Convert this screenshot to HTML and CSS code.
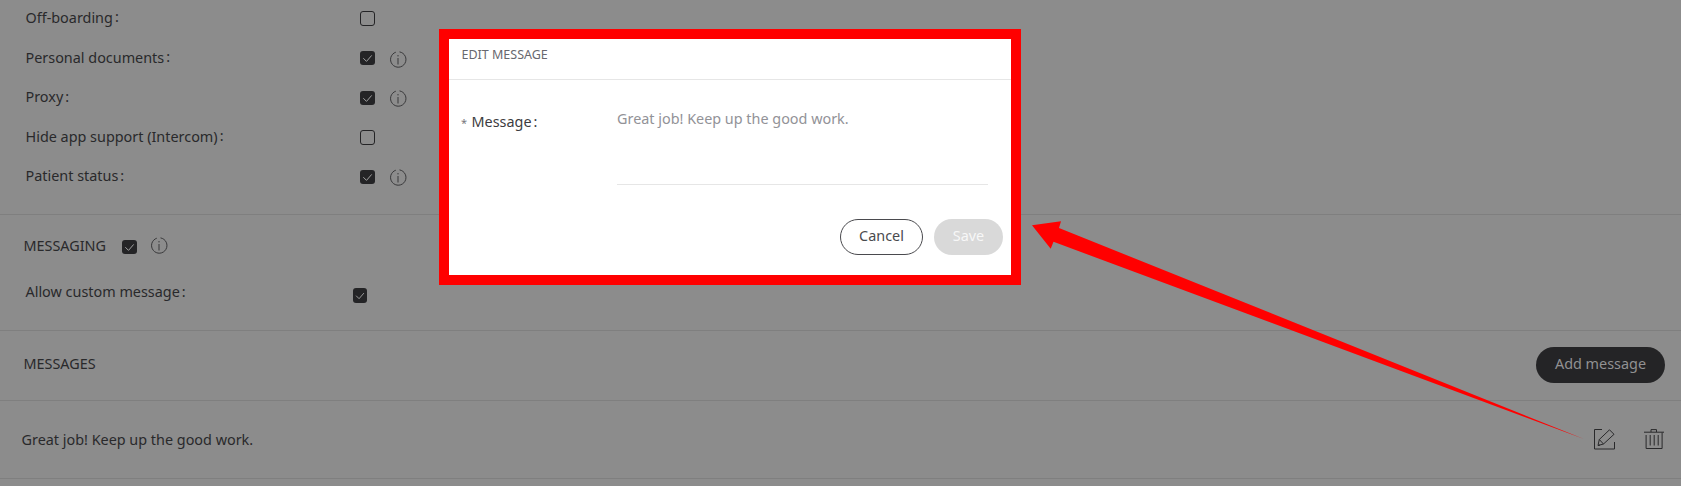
FILE: index.html
```html
<!DOCTYPE html>
<html lang="en">
<head>
<meta charset="utf-8">
<title>Messaging settings</title>
<link rel="stylesheet" href="styles.css">
</head>
<body>
<svg class="defs" aria-hidden="true">
  <symbol id="info" viewBox="0 0 17 17"><path d="M9.5 .9A7.7 7.7 0 1 1 5.8 1.2M8 7v6.5M8 4v1.4"/></symbol>
  <symbol id="check" viewBox="0 0 15 14"><path d="M3.3 7.2l3.2 3.2 5.2-6"/></symbol>
</svg>
<main class="page">
  <section class="options">
    <div class="option"><span class="label">Off-boarding<i class="colon high">:</i></span><span class="box empty"></span></div>
    <div class="option"><span class="label">Personal documents<i class="colon high">:</i></span><span class="box"><svg><use href="#check"/></svg></span><svg class="info"><use href="#info"/></svg></div>
    <div class="option low"><span class="label">Proxy<i class="colon">:</i></span><span class="box"><svg><use href="#check"/></svg></span><svg class="info"><use href="#info"/></svg></div>
    <div class="option"><span class="label">Hide app support (Intercom)<i class="colon high">:</i></span><span class="box empty"></span></div>
    <div class="option low"><span class="label">Patient status<i class="colon">:</i></span><span class="box"><svg><use href="#check"/></svg></span><svg class="info"><use href="#info"/></svg></div>
  </section>
  <section class="messaging">
    <div class="heading"><h2 class="title">MESSAGING</h2><span class="box"><svg><use href="#check"/></svg></span><svg class="info"><use href="#info"/></svg></div>
    <div class="custom"><span class="label">Allow custom message<i class="colon">:</i></span><span class="box narrow"><svg><use href="#check"/></svg></span></div>
  </section>
  <section class="messages-head">
    <h2 class="title">MESSAGES</h2>
    <button class="button add">Add message</button>
  </section>
  <section class="message-row">
    <span class="message">Great job! Keep up the good work.</span>
    <span class="actions">
      <svg class="edit" viewBox="0 0 21 21"><path d="M8 .5H.5v19.5H20.5V13"/><path d="M4 16.5l1.3-6L15.5.8 20 5.3 9.5 15zM5.3 10.5l4.2 4.5M4 16.5l2-.5"/></svg>
      <svg class="trash" viewBox="0 0 20 20"><path d="M0 3.2h20M7 3V.6h5.5V3M2.1 6v13.5h16V3.5M6.2 6v10.5M10.2 6v10.5M14.2 6v10.5"/></svg>
    </span>
  </section>
</main>
<div class="dialog">
  <header class="dialog-head">EDIT MESSAGE</header>
  <div class="field">
    <span class="field-label"><span class="star">*</span>Message<i class="colon">:</i></span>
    <div class="textarea">Great job! Keep up the good work.</div>
  </div>
  <footer class="dialog-foot">
    <button class="button cancel">Cancel</button>
    <button class="button save">Save</button>
  </footer>
</div>
<svg class="arrow" viewBox="0 0 1681 486"><path d="M1032 225.3L1061 221.2 1059 228 1584 439 1053.5 241.8 1050.7 248.7Z"/></svg>
</body>
</html>
```
FILE: styles.css
```css
* { box-sizing: border-box; }
body {
  margin: 0;
  width: 1681px;
  height: 486px;
  overflow: hidden;
  background: #8c8c8c;
  color: #29292b;
  font: 14.4px/20px "Noto Sans", sans-serif;
}
.defs { position: absolute; width: 0; height: 0; }
svg { fill: none; stroke: currentColor; }
.page { display: flex; flex-direction: column; height: 486px; }
.page section { border-bottom: 1px solid #7f7f7f; flex: none; }
.label { width: 334.5px; }
.colon { font-style: normal; margin-left: 2px; }
.high { position: relative; top: -1px; }
.options {
  display: grid;
  grid-template-rows: 40px 39px 40px 39px 40px;
  height: 215px;
  padding: 8px 0 0 25.5px;
}
.option { display: flex; align-items: flex-start; }
.box {
  display: flex;
  width: 15px;
  height: 14px;
  margin-top: 3px;
  border-radius: 3px;
  background: #242426;
  color: #a0a0a0;
}
.box svg { width: 100%; height: 100%; }
.empty { height: 15px; border: 1px solid #242426; background: none; }
.info { width: 17px; height: 17px; margin: 2.5px 0 0 14.5px; stroke-width: 1; color: #38383a; }
.low .box { margin-top: 4px; }
.messaging { height: 116px; }
.heading { display: flex; padding: 21px 0 0 23.5px; }
.title { margin: 0; font-size: 14.4px; font-weight: 400; line-height: 20px; width: 98.5px; }
.heading .box { margin-top: 4px; }
.heading .info { margin: .5px 0 0 13.5px; }
.custom { display: flex; padding: 26px 0 0 25.5px; }
.custom .label { width: 327.5px; }
.custom .narrow { width: 14px; height: 15px; margin-top: 6px; }
.messages-head {
  display: flex;
  justify-content: space-between;
  height: 70px;
  padding: 16px 16px 0 23.5px;
}
.messages-head .title { padding-top: 7px; }
.button {
  height: 36px;
  border: 0;
  border-radius: 18px;
  padding: 0 0 2px;
  font: inherit;
}
.add { width: 129px; background: #242426; color: #919192; }
.message-row {
  display: flex;
  justify-content: space-between;
  height: 78px;
  padding: 28px 17px 0 21.5px;
}
.message { padding-top: 1px; }
.actions { display: flex; gap: 29px; }
.edit { width: 21px; height: 21px; }
.trash { width: 20px; height: 20px; }
.dialog {
  position: absolute;
  left: 439px;
  top: 29px;
  width: 582px;
  height: 256px;
  border: 10px solid #f00;
  background: #fff;
  color: #3c3c40;
}
.dialog-head {
  height: 41px;
  padding: 6px 12.5px;
  border-bottom: 1px solid #e6e6e6;
  font-size: 12.5px;
  color: #68686e;
}
.field { display: flex; padding: 29px 23px 0 12px; height: 105px; }
.field-label { width: 156px; padding-top: 3px; }
.star { display: inline-block; width: 10.5px; font-size: 11px; color: #77777b; }
.textarea { flex: 1; height: 76px; border-bottom: 1px solid #e6e6e6; color: #929297; }
.dialog-foot { display: flex; justify-content: flex-end; gap: 11px; padding: 34px 8px 0 0; }
.cancel { width: 83px; border: 1px solid #4a4a4e; background: #fff; color: #4a4a4e; }
.save { width: 69px; background: #d9d9d9; color: #f7f7f7; }
.arrow { position: absolute; left: 0; top: 0; width: 1681px; height: 486px; fill: #f00; stroke: none; }
```
